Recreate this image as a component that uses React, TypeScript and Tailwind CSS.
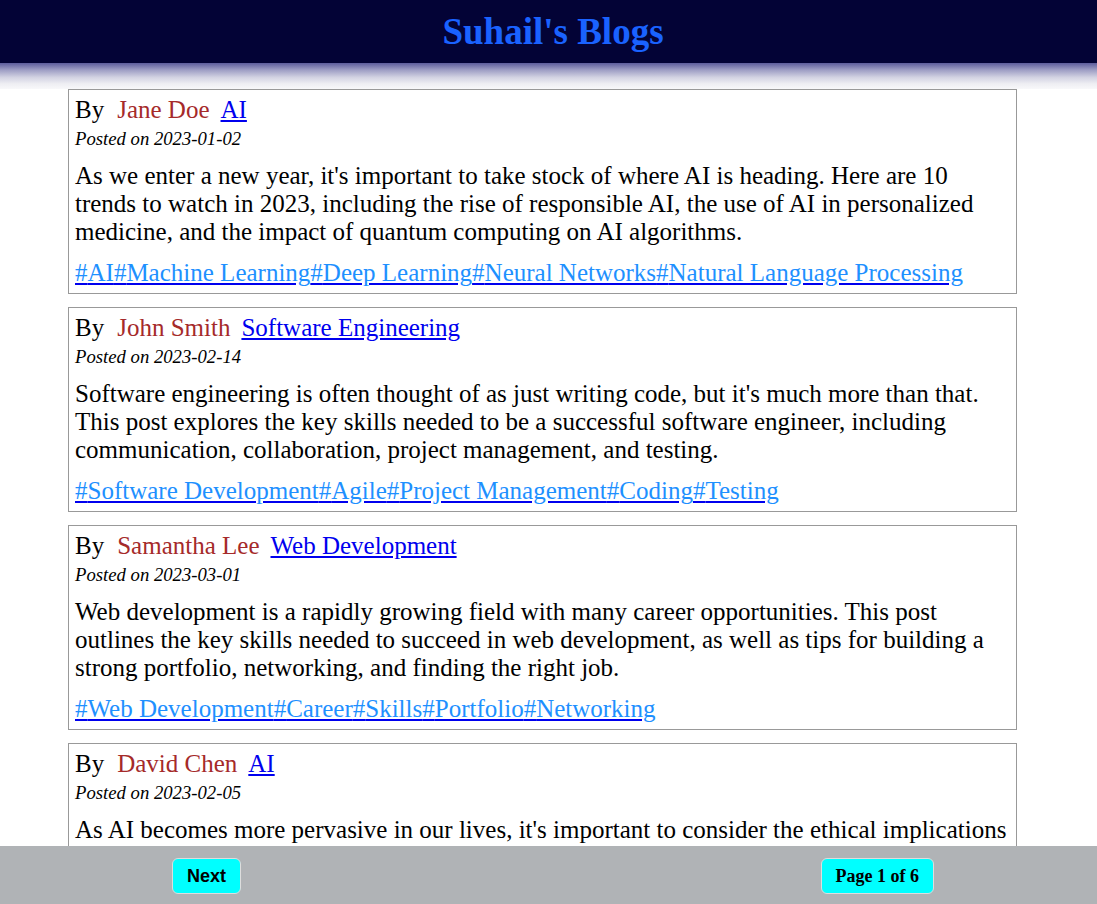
import React from 'react';

interface Post {
  author: string;
  category: string;
  date: string;
  body: string;
  tags: string[];
}

const posts: Post[] = [
  {
    author: 'Jane Doe',
    category: 'AI',
    date: '2023-01-02',
    body: "As we enter a new year, it's important to take stock of where AI is heading. Here are 10 trends to watch in 2023, including the rise of responsible AI, the use of AI in personalized medicine, and the impact of quantum computing on AI algorithms.",
    tags: ['AI', 'Machine Learning', 'Deep Learning', 'Neural Networks', 'Natural Language Processing'],
  },
  {
    author: 'John Smith',
    category: 'Software Engineering',
    date: '2023-02-14',
    body: "Software engineering is often thought of as just writing code, but it's much more than that. This post explores the key skills needed to be a successful software engineer, including communication, collaboration, project management, and testing.",
    tags: ['Software Development', 'Agile', 'Project Management', 'Coding', 'Testing'],
  },
  {
    author: 'Samantha Lee',
    category: 'Web Development',
    date: '2023-03-01',
    body: 'Web development is a rapidly growing field with many career opportunities. This post outlines the key skills needed to succeed in web development, as well as tips for building a strong portfolio, networking, and finding the right job.',
    tags: ['Web Development', 'Career', 'Skills', 'Portfolio', 'Networking'],
  },
  {
    author: 'David Chen',
    category: 'AI',
    date: '2023-02-05',
    body: "As AI becomes more pervasive in our lives, it's important to consider the ethical implications of its use. This post explores the key ethical issues surrounding AI, including bias, privacy, and accountability.",
    tags: ['AI', 'Ethics', 'Privacy', 'Bias', 'Accountability'],
  },
];

const PostCard: React.FC<{ post: Post }> = ({ post }) => (
  <div className="border border-[#999999] bg-white px-[6px] pt-[6px] pb-[6px]">
    <div className="text-[25px] leading-[28px]">
      <span>By</span>
      <span className="ml-[13px] text-[#a52a2a]">{post.author}</span>
      <a href="#" className="ml-[11px] text-[#0000ee] underline">
        {post.category}
      </a>
    </div>
    <div className="mt-[4px] text-[18.7px] leading-[22px] italic">Posted on {post.date}</div>
    <p className="mt-[12px] text-[25px] leading-[28px]">{post.body}</p>
    <div className="mt-[13px] text-[25px] leading-[28px]">
      {post.tags.map((t) => (
        <a key={t} href="#" className="text-[#0000ee] underline">
          <span className="text-[#1e90ff]">#{t}</span>
        </a>
      ))}
    </div>
  </div>
);

export default function App() {
  return (
    <div className="min-h-screen bg-white text-black font-['Liberation_Serif','Times_New_Roman',serif]">
      <header className="flex h-[63px] items-center justify-center bg-[#030336] pl-[9px]">
        <h1 className="text-[37px] font-bold leading-none text-[#1a62ff]">Suhail's Blogs</h1>
      </header>
      <div className="h-[26px] bg-[linear-gradient(to_bottom,#5c5c9c_0%,#9a9ac2_25%,#d2d2e2_55%,#eeeef3_80%,#f8f8fa_100%)]" />
      <main className="ml-[68px] flex w-[949px] flex-col gap-[13px] pb-[80px]">
        {posts.map((p) => (
          <PostCard key={p.author} post={p} />
        ))}
      </main>
      <footer className="fixed bottom-0 left-0 right-0 flex h-[58px] items-start justify-between bg-[#b0b3b6] pl-[172px] pr-[163px] pt-[12px]">
        <button className="h-[36px] rounded-[6px] border border-[#dddddd] bg-[#00ffff] px-[14px] font-['Liberation_Sans',Arial,sans-serif] text-[18px] font-bold text-black">
          Next
        </button>
        <button className="h-[36px] rounded-[6px] border border-[#dddddd] bg-[#00ffff] px-[14px] text-[18px] font-bold text-black">
          Page 1 of 6
        </button>
      </footer>
    </div>
  );
}
